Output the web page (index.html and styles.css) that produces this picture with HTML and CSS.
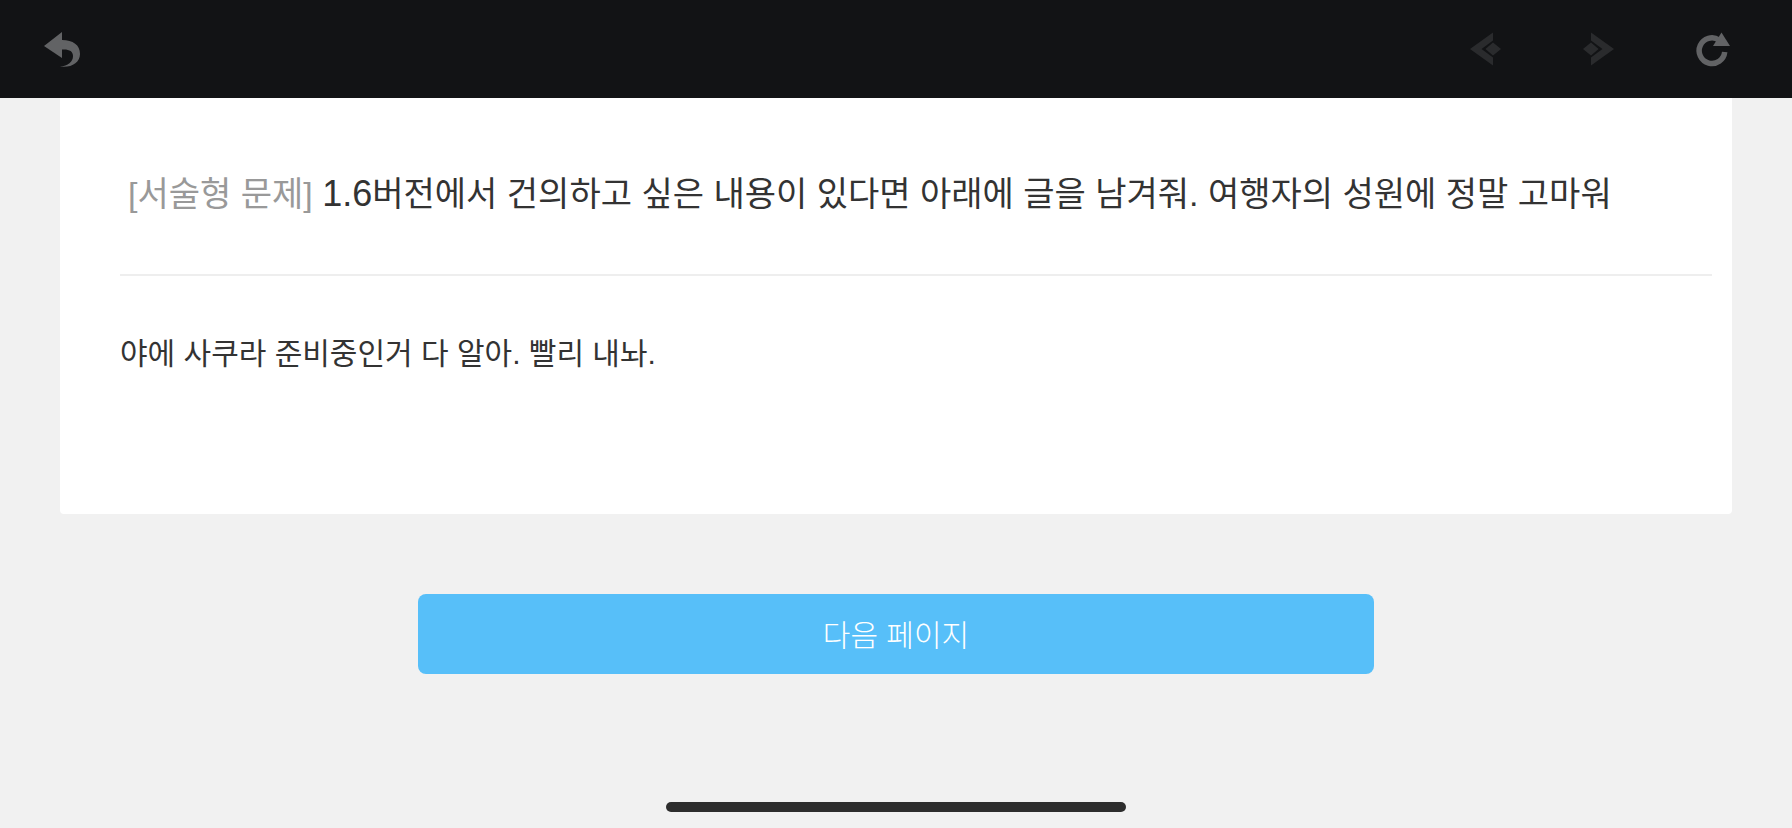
FILE: index.html
```html
<!DOCTYPE html>
<html lang="ko">
<head>
  <meta charset="UTF-8" />
  <title>설문조사</title>
  <meta name="viewport" content="width=device-width, initial-scale=1.0" />
  <link rel="stylesheet" href="styles.css">
</head>
<body>

<header class="toolbar">
  <button class="tool" type="button" aria-label="닫기">
    <svg viewBox="0 0 40 40"><path d="M2 17 L20 3 V11 C31 11 38 16 38 25 C38 34 29 39 18 37.500 C26 37 31 33 31 27 C31 22 27 20 20 20.500 V29 Z"/></svg>
  </button>
  <nav class="history">
    <button class="tool" type="button" aria-label="이전" disabled>
      <svg viewBox="0 0 40 40"><path d="M4 20 L27 3.500 V11.500 L15.500 20 L27 28.500 V36.500 Z M19.500 20 L27 13.500 L35 20 L27 26.500 Z"/></svg>
    </button>
    <button class="tool" type="button" aria-label="다음" disabled>
      <svg viewBox="0 0 40 40"><path d="M35 20 L12 3.500 V11.500 L23.500 20 L12 28.500 V36.500 Z M19.500 20 L12 13.500 L4 20 L12 26.500 Z"/></svg>
    </button>
    <button class="tool" type="button" aria-label="새로고침">
      <svg viewBox="0 0 40 40">
        <path class="ring" d="M27 11 A12.800 12.800 0 1 0 32.700 23"/>
        <path d="M29.500 3.500 L38 17 H21 Z"/>
      </svg>
    </button>
  </nav>
</header>

<main>
  <section class="card">
    <label class="question" for="answer"><span class="type">[서술형 문제]</span> <span class="version">1.6</span>버전에서 건의하고 싶은 내용이 있다면 아래에 글을 남겨줘. 여행자의 성원에 정말 고마워</label>
    <textarea class="answer" id="answer" spellcheck="false">야에 사쿠라 준비중인거 다 알아. 빨리 내놔.</textarea>
  </section>
  <button class="next" type="button">다음 페이지</button>
</main>

<div class="home-bar"></div>

</body>
</html>
```
FILE: styles.css
```css
* {
  box-sizing: border-box;
}

body {
  margin: 0;
  min-height: 100vh;
  display: flex;
  flex-direction: column;
  font-family: "Liberation Sans", "Noto Sans CJK KR", sans-serif;
  background: #f1f1f1;
  color: #333;
}

button,
textarea {
  font-family: inherit;
}

.toolbar {
  display: flex;
  justify-content: space-between;
  align-items: center;
  height: 98px;
  padding: 0 60px 0 42px;
  background: #121315;
}

.history {
  display: flex;
  gap: 73px;
}

.tool {
  width: 40px;
  height: 40px;
  padding: 0;
  border: none;
  background: none;
  color: #626365;
  cursor: pointer;
}

.tool:disabled {
  color: #2a2b2d;
  cursor: default;
}

.tool svg {
  display: block;
  fill: currentColor;
}

.tool .ring {
  fill: none;
  stroke: currentColor;
  stroke-width: 5.5;
}

main {
  flex: 1;
  padding: 0 60px;
}

.card {
  padding: 68px 20px 40px 60px;
  background: #fff;
  border-radius: 0 0 4px 4px;
}

.question {
  display: block;
  padding: 0 8px 52px;
  border-bottom: 2px solid #eee;
  font-size: 34px;
  line-height: 56px;
}

.type {
  color: #999;
}

.version {
  font-size: 36px;
}

.answer {
  display: block;
  width: 100%;
  height: 144px;
  margin-top: 54px;
  padding: 0;
  border: none;
  outline: none;
  resize: none;
  background: none;
  color: #333;
  font-size: 30px;
  line-height: 48px;
}

.next {
  display: block;
  width: 956px;
  max-width: 100%;
  height: 80px;
  margin: 80px auto 0;
  padding: 0 0 2px;
  border: none;
  border-radius: 8px;
  background: #57bff9;
  color: #fff;
  font-size: 30px;
  font-weight: 300;
  cursor: pointer;
}

.home-bar {
  width: 460px;
  height: 10px;
  margin: 0 auto 16px;
  border-radius: 5px;
  background: #2d2d2d;
}
```
